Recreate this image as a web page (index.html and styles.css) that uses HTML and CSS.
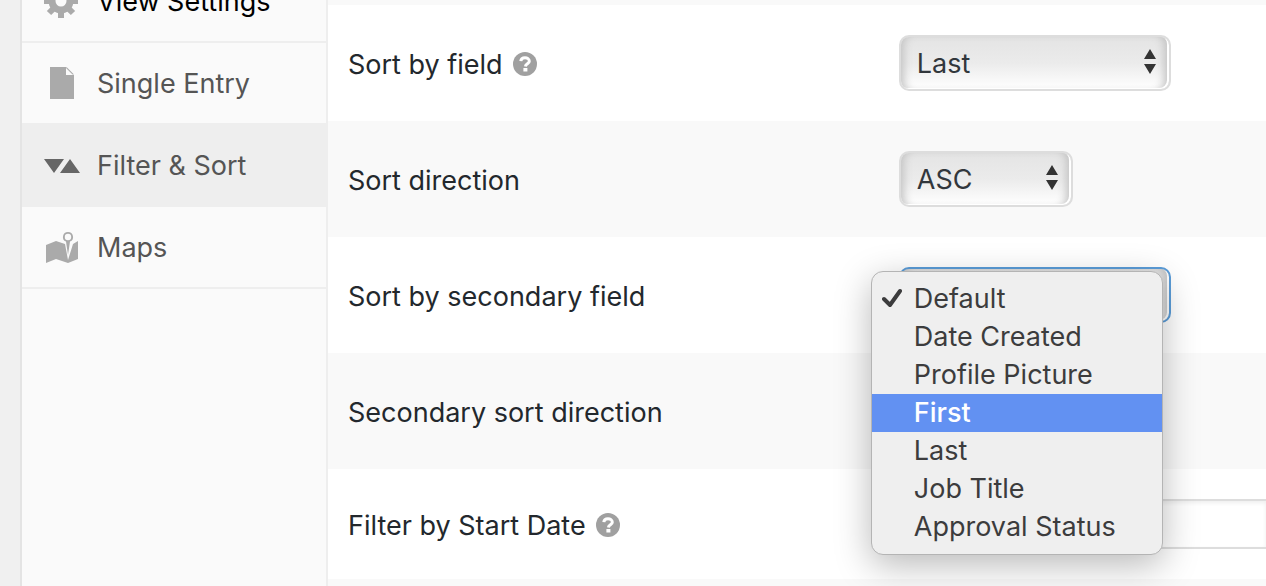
FILE: index.html
```html
<!DOCTYPE html>
<html lang="en">
<head>
<meta charset="utf-8">
<title>View Settings</title>
<link rel="stylesheet" href="styles.css">
</head>
<body>
<div class="page">
  <nav class="sidebar" aria-label="Settings sections">
    <a class="tab tab-current" href="#view">
      <svg class="tab-icon" viewBox="0 0 36 36" aria-hidden="true"><g fill="none" stroke="#aaa" stroke-width="6"><circle cx="17" cy="18" r="9" stroke-width="7"/><path d="M17 1v6M17 29v6M0 18h6M28 18h6M5 6l4.200 4.200M24.800 25.800L29 30M5 30l4.200-4.200M24.800 10.200L29 6"/></g></svg>
      <span>View Settings</span>
    </a>
    <a class="tab" href="#single">
      <svg class="tab-icon" viewBox="0 0 36 36" aria-hidden="true"><path d="M6 2h16v8h8v24H6z"/><path d="M22.500 2L30 9.500h-1.500L22 3z"/></svg>
      <span>Single Entry</span>
    </a>
    <a class="tab tab-active" href="#filter">
      <svg class="tab-icon" viewBox="0 0 36 36" aria-hidden="true"><path d="M0 12h20L10 26zM16 26L26 12l10 14z"/></svg>
      <span>Filter &amp; Sort</span>
    </a>
    <a class="tab" href="#maps">
      <svg class="tab-icon" viewBox="0 0 36 36" aria-hidden="true"><path d="M2 16l10-4 9 3 3 16 5-16 5-3v18l-10 4-12-4-10 4z"/><path fill-rule="evenodd" d="M24 3a5 5 0 0 1 2 9.600L24 26l-2-13.400A5 5 0 0 1 24 3zm0 1.800a3.200 3.200 0 1 0 0 6.400 3.200 3.200 0 0 0 0-6.400z"/></svg>
      <span>Maps</span>
    </a>
  </nav>
  <main class="settings">
    <div class="row"></div>
    <div class="row">
      <div class="label"><label for="sort-field">Sort by field</label>
        <svg class="help" viewBox="0 0 24 24" aria-hidden="true"><circle cx="12" cy="12" r="12"/><path d="M7.800 9.200C8 6.800 9.700 5.800 12 5.800s4.300 1.200 4.300 3.400c0 2.600-3.600 2.600-3.900 5.300" fill="none" stroke="#fff" stroke-width="3"/><path d="M10.400 16h4v3.500h-4z" fill="#fff"/></svg>
      </div>
      <div class="control wide">
        <select id="sort-field"><option>Last</option></select>
        <svg class="arrows" viewBox="0 0 12 26" aria-hidden="true"><path d="M0 10L6 0l6 10zM0 15h12L6 25z"/></svg>
      </div>
    </div>
    <div class="row">
      <div class="label"><label for="sort-dir">Sort direction</label></div>
      <div class="control">
        <select id="sort-dir"><option>ASC</option></select>
        <svg class="arrows" viewBox="0 0 12 26" aria-hidden="true"><path d="M0 10L6 0l6 10zM0 15h12L6 25z"/></svg>
      </div>
    </div>
    <div class="row">
      <div class="label"><label for="sort-field-2">Sort by secondary field</label></div>
      <div class="control wide open">
        <select id="sort-field-2"><option>Default</option></select>
        <div class="menu" role="listbox" aria-label="Sort by secondary field">
          <button class="item" type="button" role="option" aria-selected="true"><svg class="check" viewBox="0 0 22 20" aria-hidden="true"><path d="M2 11l6 6L18 3"/></svg>Default</button>
          <button class="item" type="button" role="option">Date Created</button>
          <button class="item" type="button" role="option">Profile Picture</button>
          <button class="item item-hover" type="button" role="option">First</button>
          <button class="item" type="button" role="option">Last</button>
          <button class="item" type="button" role="option">Job Title</button>
          <button class="item" type="button" role="option">Approval Status</button>
        </div>
      </div>
    </div>
    <div class="row">
      <div class="label"><label for="sort-dir-2">Secondary sort direction</label></div>
      <div class="control">
        <select id="sort-dir-2"><option></option></select>
      </div>
    </div>
    <div class="row row-short">
      <div class="label"><label for="start-date">Filter by Start Date</label>
        <svg class="help" viewBox="0 0 24 24" aria-hidden="true"><circle cx="12" cy="12" r="12"/><path d="M7.800 9.200C8 6.800 9.700 5.800 12 5.800s4.300 1.200 4.300 3.400c0 2.600-3.600 2.600-3.900 5.300" fill="none" stroke="#fff" stroke-width="3"/><path d="M10.400 16h4v3.500h-4z" fill="#fff"/></svg>
      </div>
      <input class="text" id="start-date" type="text">
    </div>
    <div class="row"></div>
  </main>
</div>
</body>
</html>
```
FILE: styles.css
```css
* { box-sizing: border-box; }

body {
  margin: 0;
  background: #f0f0f0;
  color: #23282d;
  font: 27px/38px Inter, "Liberation Sans", sans-serif;
}

.page {
  display: flex;
  height: 100vh;
  padding-left: 20px;
  overflow: hidden;
}

/* Section tabs */
.sidebar {
  flex: 0 0 308px;
  margin-top: -39px;
  border: 2px solid #e4e4e4;
  border-width: 0 2px;
  border-right-color: #eee;
  background: #fafafa;
}

.tab {
  display: flex;
  align-items: center;
  gap: 17px;
  height: 82px;
  padding-left: 22px;
  border-bottom: 2px solid #eee;
  color: #555;
  text-decoration: none;
}

.tab span { padding-top: 2px; }
.tab-current { color: #000; }
.tab-active { background: #eee; }

.tab-icon {
  width: 36px;
  height: 36px;
  fill: #aaa;
}

.tab-active .tab-icon { fill: #666; }

/* Settings rows */
.settings {
  flex: 1;
  min-width: 0;
  margin-top: -111px;
  background: #fff;
}

.row {
  display: grid;
  grid-template-columns: 3fr 2fr;
  align-items: center;
  height: 116px;
  padding-left: 20px;
}

.row:nth-child(odd) { background: #f9f9f9; }
.row:nth-child(even) { background: #fff; }
.row-short { height: 110px; }

.label {
  display: flex;
  align-items: center;
  gap: 10px;
  padding-top: 2px;
}

.label label { padding-top: 2px; }

.help {
  width: 24px;
  height: 24px;
  fill: #a0a0a0;
}

.control {
  position: relative;
  width: 174px;
}

.wide { width: 272px; }

select {
  display: block;
  width: 100%;
  height: 56px;
  padding: 2px 16px 0;
  appearance: none;
  border: 2px solid #ddd;
  border-radius: 10px;
  background: linear-gradient(#e4e4e4, #ebebeb 50%, #fff);
  box-shadow: inset -2px -1px #fff, inset 8px 0 8px -5px #c4c4c4, inset -10px 0 8px -5px #c4c4c4;
  color: #32373c;
  font: inherit;
}

.open select { border-color: #5b9dd9; }

.arrows {
  position: absolute;
  top: 14px;
  right: 15px;
  width: 12px;
  height: 26px;
  fill: #333;
}

/* Drop-down list */
.menu {
  position: absolute;
  z-index: 1;
  top: 4px;
  left: -28px;
  width: 292px;
  padding: 8px 0;
  overflow: hidden;
  border: 1px solid #b4b4b4;
  border-radius: 12px;
  background: #efefef;
  box-shadow: 0 10px 36px rgba(0, 0, 0, .28);
}

.item {
  position: relative;
  display: block;
  width: 100%;
  height: 38px;
  padding: 0 0 0 42px;
  border: 0;
  background: none;
  color: #3c3c3d;
  font: inherit;
  text-align: left;
}

.item-hover {
  background: #6291f2;
  color: #fff;
  font-weight: 500;
}

.check {
  position: absolute;
  top: 8px;
  left: 10px;
  width: 22px;
  height: 20px;
  fill: none;
  stroke: #3c3c3d;
  stroke-width: 4;
  stroke-linecap: round;
  stroke-linejoin: round;
}

.text {
  width: 100%;
  height: 50px;
  border: 2px solid #ddd;
  border-right: 0;
  background: #fff;
  box-shadow: inset 0 2px 4px rgba(0, 0, 0, .07);
  font: inherit;
}
```
